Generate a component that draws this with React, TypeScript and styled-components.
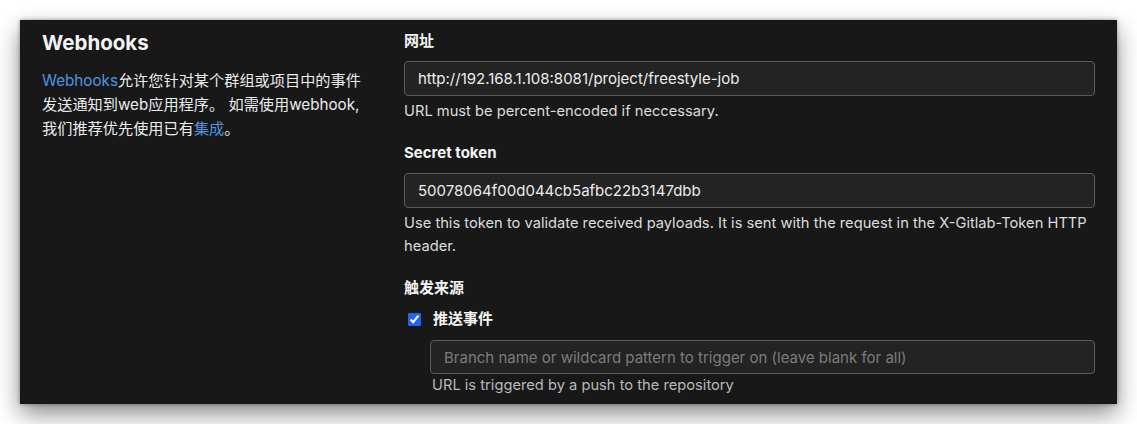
import React from 'react'
import styled, { createGlobalStyle } from 'styled-components'

const GlobalStyle = createGlobalStyle`
  html, body {
    margin: 0;
    padding: 0;
    background: #ffffff;
  }
  body {
    font-family: Inter, "Noto Sans CJK SC", "Noto Sans", sans-serif;
    -webkit-font-smoothing: antialiased;
  }
`

function App() {
  return (
    <Page>
      <GlobalStyle />
      <Panel>
        <Intro>
          <Title>Webhooks</Title>
          <Description>
            <Link>Webhooks</Link>允许您针对某个群组或项目中的事件
            <br />
            发送通知到web应用程序。 如需使用webhook,
            <br />
            我们推荐优先使用已有<Link>集成</Link>。
          </Description>
        </Intro>
        <Form>
          <Group>
            <Label>网址</Label>
            <Input type="text" defaultValue="http://192.168.1.108:8081/project/freestyle-job" />
            <Help>URL must be percent-encoded if neccessary.</Help>
          </Group>
          <Group>
            <Label>Secret token</Label>
            <Input type="text" defaultValue="50078064f00d044cb5afbc22b3147dbb" />
            <Help>
              Use this token to validate received payloads. It is sent with the request in the X-Gitlab-Token HTTP
              header.
            </Help>
          </Group>
          <Group>
            <Label>触发来源</Label>
            <CheckRow>
              <Check type="checkbox" defaultChecked />
              <CheckLabel>推送事件</CheckLabel>
            </CheckRow>
            <Nested>
              <Input
                type="text"
                placeholder="Branch name or wildcard pattern to trigger on (leave blank for all)"
                small
              />
              <Help muted>URL is triggered by a push to the repository</Help>
            </Nested>
          </Group>
        </Form>
      </Panel>
    </Page>
  )
}

export default App

const Page = styled.div`
  padding: 20px;
  height: 424px;
  box-sizing: border-box;
`

const Panel = styled.div`
  width: 1097px;
  height: 384px;
  box-sizing: border-box;
  overflow: hidden;
  background: #181818;
  box-shadow: 0 10px 22px rgba(0, 0, 0, 0.45), 0 0 4px rgba(0, 0, 0, 0.35);
  padding: 0 22px;
  display: grid;
  grid-template-columns: 330px 1fr;
  column-gap: 32px;
  align-items: start;
  color: #ececef;
`

const Intro = styled.div`
  padding-top: 11px;
`

const Title = styled.h4`
  margin: 0 0 14px;
  font-size: 20.5px;
  line-height: 24px;
  font-weight: 700;
  color: #f4f4f5;
`

const Description = styled.p`
  margin: 0;
  font-size: 15.2px;
  line-height: 24px;
  color: #ececef;
  white-space: nowrap;
`

const Link = styled.span`
  color: #4f95e0;
`

const Form = styled.div`
  padding-top: 11px;
  display: flex;
  flex-direction: column;
  gap: 20px;
`

const Group = styled.div`
  display: flex;
  flex-direction: column;
`

const Label = styled.div`
  font-size: 15px;
  line-height: 20px;
  font-weight: 700;
  margin-bottom: 10px;
  color: #f4f4f5;
`

const Input = styled.input<{ small?: boolean }>`
  box-sizing: border-box;
  width: 100%;
  height: ${({ small }) => (small ? '34px' : '35px')};
  margin: 0;
  padding: 0 13px;
  background: #232323;
  border: 1px solid #5b5b5b;
  border-radius: 4px;
  color: #ececef;
  font-family: inherit;
  font-size: 15px;
  outline: none;
  &::placeholder {
    color: #7c7c7c;
  }
`

const Help = styled.div<{ muted?: boolean }>`
  margin-top: ${({ muted }) => (muted ? '0' : '4px')};
  padding-left: ${({ muted }) => (muted ? '2px' : '0')};
  font-size: 14.7px;
  line-height: 23px;
  color: ${({ muted }) => (muted ? '#b9b9bd' : '#dcdcde')};
`

const CheckRow = styled.label`
  display: flex;
  align-items: center;
  height: 22px;
  padding-left: 4px;
`

const Check = styled.input`
  width: 13px;
  height: 13px;
  margin: 0 12px 0 0;
  accent-color: #2264f0;
`

const CheckLabel = styled.span`
  font-size: 15px;
  line-height: 20px;
  font-weight: 700;
  color: #f4f4f5;
`

const Nested = styled.div`
  margin: 10px 0 0 26px;
  display: flex;
  flex-direction: column;
`
